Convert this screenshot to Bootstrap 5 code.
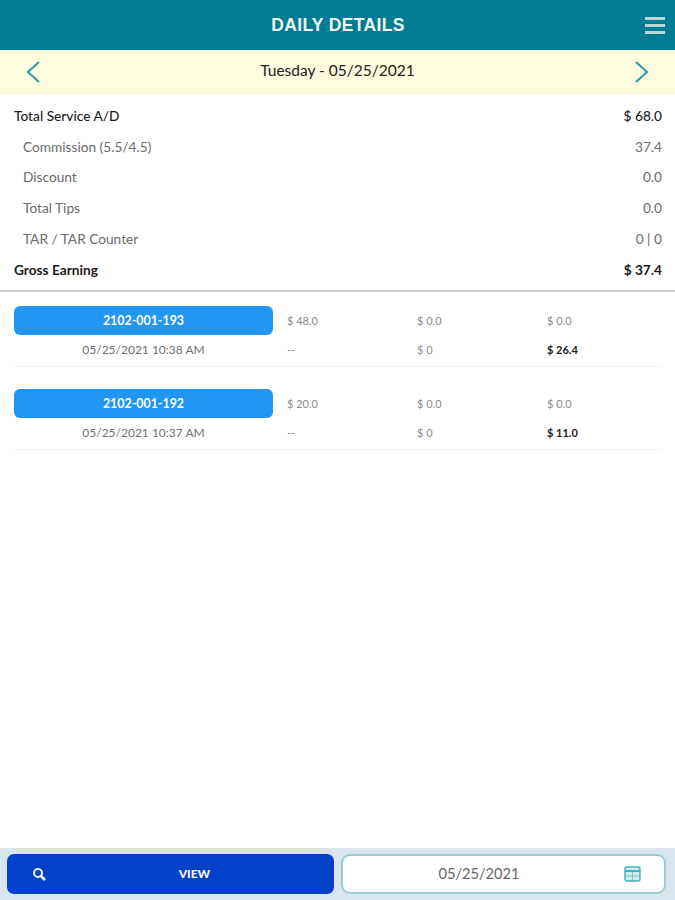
<!DOCTYPE html>
<html lang="en">
<head>
<meta charset="utf-8">
<title>Daily Details</title>
<link href="https://cdn.jsdelivr.net/npm/bootstrap@5.3.0/dist/css/bootstrap.min.css" rel="stylesheet">
<style>
html,body{height:100%}
body{font-family:Lato,"Liberation Sans",sans-serif;background:#fff;color:#333;width:675px;height:900px;overflow:hidden}
.screen{height:900px}
.topbar{height:50px;background:#007c90;color:#f2f7f8}
.topbar-title{font-family:"Liberation Sans",sans-serif;font-weight:700;font-size:17.5px;letter-spacing:.35px;padding-left:1px}
.menu-btn{right:10px;top:17px;width:20px}
.menu-btn i{display:block;height:3px;background:#b9d6dc;margin-bottom:4px}
.datebar{height:44px;background:#fdfcdc;padding:0 25px;color:#222;font-size:15.5px;border-bottom:1px solid #f4f3e2}
.datebar span{margin-top:-1px}
.summary{padding:7px 13px 5px 14px;border-bottom:2px solid #cfcfcf;height:198px}
.sumrow{height:30.7px;font-size:13.7px;color:#6b6b6b}
.sumrow.sub{padding-left:9px}
.sumrow.main{color:#1c1c1c;font-weight:500}
.tickets{padding:14px 14px 0}
.ticket{height:61px;margin-bottom:22px;border-bottom:1px solid #f1f1f1;font-size:11px;color:#8a8a8a}
.ticket-row{height:29px}
.ticket-row .col-val{padding-top:1px}
.ticket-time{font-size:12px;color:#707070;text-align:center}
.col-id{width:259px;flex:none}
.col-val{width:130px;flex:none;padding-left:14px}
.col-val.last{width:115px}
.ticket-btn{height:29px;border-radius:6px;background:#2196f3;border:0;color:#fff;font-weight:700;font-size:12.4px;padding:2px 0 0;width:100%}
.total{color:#1a1a1a;font-weight:700}
.bottombar{height:52px;background:#d9e4ec;padding:6px 9px 6px 7px;gap:7px;margin-top:auto}
.view-btn{width:327px;height:40px;background:#0342c8;border:0;border-radius:7px;color:#f4f6fc;font-weight:900;font-size:12px;padding:0 0 0 48px}
.search-ic{left:25px;top:13px}
.datebox{width:325px;height:40px;background:#fff;border:2px solid #9ccbd6;border-radius:9px;color:#666;font-size:14.6px;padding:0 49px 0 0}
.cal-ic{right:23px;top:9px}
</style>
</head>
<body>
<div class="screen d-flex flex-column">
  <header class="topbar position-relative d-flex align-items-center justify-content-center">
    <span class="topbar-title">DAILY DETAILS</span>
    <div class="menu-btn position-absolute"><i></i><i></i><i></i></div>
  </header>
  <div class="datebar d-flex align-items-center justify-content-between">
    <svg width="16" height="24" viewBox="0 0 16 24" fill="none" stroke="#2a9aa6" stroke-width="2"><path d="M14 2 3 12l11 10"/></svg>
    <span>Tuesday - 05/25/2021</span>
    <svg width="16" height="24" viewBox="0 0 16 24" fill="none" stroke="#2a9aa6" stroke-width="2"><path d="M2 2l11 10L2 22"/></svg>
  </div>
  <section class="summary">
    <div class="sumrow main d-flex align-items-center justify-content-between"><span>Total Service A/D</span><span>$ 68.0</span></div>
    <div class="sumrow sub d-flex align-items-center justify-content-between"><span>Commission (5.5/4.5)</span><span>37.4</span></div>
    <div class="sumrow sub d-flex align-items-center justify-content-between"><span>Discount</span><span>0.0</span></div>
    <div class="sumrow sub d-flex align-items-center justify-content-between"><span>Total Tips</span><span>0.0</span></div>
    <div class="sumrow sub d-flex align-items-center justify-content-between"><span>TAR / TAR Counter</span><span>0 | 0</span></div>
    <div class="sumrow main fw-bold d-flex align-items-center justify-content-between"><span>Gross Earning</span><span>$ 37.4</span></div>
  </section>
  <section class="tickets">
    <div class="ticket">
      <div class="ticket-row d-flex align-items-center">
        <div class="col-id"><button class="ticket-btn">2102-001-193</button></div>
        <div class="col-val">$ 48.0</div><div class="col-val">$ 0.0</div><div class="col-val last">$ 0.0</div>
      </div>
      <div class="ticket-row d-flex align-items-center">
        <div class="col-id ticket-time">05/25/2021 10:38 AM</div>
        <div class="col-val">--</div><div class="col-val">$ 0</div><div class="col-val last total">$ 26.4</div>
      </div>
    </div>
    <div class="ticket">
      <div class="ticket-row d-flex align-items-center">
        <div class="col-id"><button class="ticket-btn">2102-001-192</button></div>
        <div class="col-val">$ 20.0</div><div class="col-val">$ 0.0</div><div class="col-val last">$ 0.0</div>
      </div>
      <div class="ticket-row d-flex align-items-center">
        <div class="col-id ticket-time">05/25/2021 10:37 AM</div>
        <div class="col-val">--</div><div class="col-val">$ 0</div><div class="col-val last total">$ 11.0</div>
      </div>
    </div>
  </section>
  <footer class="bottombar d-flex">
    <button class="view-btn position-relative">
      <svg class="search-ic position-absolute" width="15" height="15" viewBox="0 0 15 15" fill="none" stroke="#eef2fc" stroke-width="2"><circle cx="6" cy="6" r="4"/><path d="M9 9l4 4" stroke-width="2.6"/></svg>
      VIEW
    </button>
    <div class="datebox position-relative d-flex align-items-center justify-content-center">
      <span>05/25/2021</span>
      <svg class="cal-ic position-absolute" width="17" height="17" viewBox="0 0 17 17" fill="#d3ecef" stroke="#45aebf" stroke-width="1.4"><rect x="1" y="2" width="15" height="14" rx="2"/><path d="M1 6h15" stroke-width="2"/><path d="M1 11h15M8.500 6v10" stroke-width=".6"/></svg>
    </div>
  </footer>
</div>
<script src="https://cdn.jsdelivr.net/npm/bootstrap@5.3.0/dist/js/bootstrap.bundle.min.js"></script>
</body>
</html>
